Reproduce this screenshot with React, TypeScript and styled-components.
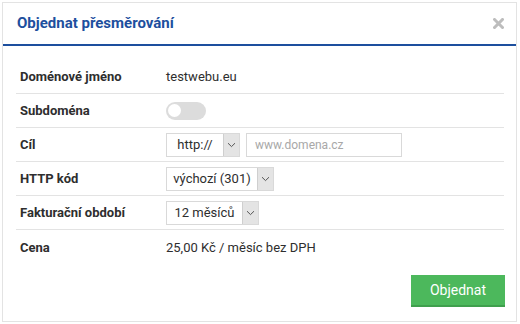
import { FC } from 'react';
import styled, { createGlobalStyle } from 'styled-components';

const colors = {
  text: '#2e2e2e',
  blue: '#1d4f9e',
  border: '#e3e3e3',
  field: '#d9d9d9',
  green: '#4cb85c',
  greenDark: '#3f9f4d',
};

const GlobalStyle = createGlobalStyle`
  html, body {
    margin: 0;
    padding: 0;
    background: #ffffff;
  }
  body {
    font-family: Roboto, 'Liberation Sans', Arial, sans-serif;
    color: ${colors.text};
  }
`;

interface SelectProps {
  value: string;
  width: number;
}

const Select: FC<SelectProps> = ({ value, width }) => (
  <SelectBox>
    <SelectValue $width={width}>{value}</SelectValue>
    <SelectArrow>
      <svg width='9' height='6' viewBox='0 0 9 6'>
        <path d='M1 1.2 L4.5 4.6 L8 1.2' fill='none' stroke='#555' strokeWidth='1' />
      </svg>
    </SelectArrow>
  </SelectBox>
);

const App: FC = () => (
  <>
    <GlobalStyle />
    <Page>
      <Modal>
        <Header>
          <Title>Objednat přesměrování</Title>
          <CloseButton title='Zavřít'>
            <svg width='11' height='11' viewBox='0 0 11 11'>
              <path d='M1.5 1.5 L9.5 9.5 M9.5 1.5 L1.5 9.5' stroke='#bdbdbd' strokeWidth='3' strokeLinecap='square' />
            </svg>
          </CloseButton>
        </Header>
        <Body>
          <Row>
            <Label>Doménové jméno</Label>
            <Value>testwebu.eu</Value>
          </Row>
          <Row>
            <Label>Subdoména</Label>
            <Value>
              <Toggle>
                <Knob />
              </Toggle>
            </Value>
          </Row>
          <Row>
            <Label>Cíl</Label>
            <Value>
              <Select value='http://' width={56} />
              <TextInput placeholder='www.domena.cz' />
            </Value>
          </Row>
          <Row>
            <Label>HTTP kód</Label>
            <Value>
              <Select value='výchozí (301)' width={90} />
            </Value>
          </Row>
          <Row>
            <Label>Fakturační období</Label>
            <Value>
              <Select value='12 měsíců' width={75} />
            </Value>
          </Row>
          <Row $last>
            <Label>Cena</Label>
            <Value>25,00 Kč / měsíc bez DPH</Value>
          </Row>
        </Body>
        <Footer>
          <SubmitButton>Objednat</SubmitButton>
        </Footer>
      </Modal>
    </Page>
  </>
);

const Page = styled.div`
  padding: 2px;
`;

const Modal = styled.div`
  width: 515px;
  height: 320px;
  box-sizing: border-box;
  border: 1px solid ${colors.border};
  background: #ffffff;
  display: flex;
  flex-direction: column;
`;

const Header = styled.div`
  height: 43px;
  box-sizing: border-box;
  border-bottom: 2px solid ${colors.blue};
  display: flex;
  align-items: center;
  justify-content: space-between;
  padding: 0 12px 0 14px;
`;

const Title = styled.div`
  color: ${colors.blue};
  font-size: 15px;
  font-weight: 700;
  margin-top: -2px;
`;

const CloseButton = styled.div`
  display: flex;
  cursor: pointer;
`;

const Body = styled.div`
  padding: 14px 12px 0 13px;
  display: flex;
  flex-direction: column;
`;

const Row = styled.div<{ $last?: boolean }>`
  height: 34px;
  box-sizing: border-box;
  display: flex;
  align-items: center;
  border-bottom: ${({ $last }) => ($last ? 'none' : `1px solid ${colors.border}`)};
  font-size: 13px;
`;

const Label = styled.div`
  width: 150px;
  padding-left: 4px;
  box-sizing: border-box;
  font-weight: 700;
  color: ${colors.text};
`;

const Value = styled.div`
  display: flex;
  align-items: center;
  gap: 6px;
  color: ${colors.text};
`;

const Toggle = styled.div`
  width: 40px;
  height: 18px;
  border-radius: 9px;
  background: #dcdcdc;
  display: flex;
  align-items: center;
  padding-left: 2px;
  box-sizing: border-box;
`;

const Knob = styled.div`
  width: 13px;
  height: 13px;
  border-radius: 50%;
  background: #ffffff;
`;

const SelectBox = styled.div`
  display: flex;
  height: 24px;
  box-sizing: border-box;
  border: 1px solid ${colors.field};
  background: #ffffff;
`;

const SelectValue = styled.div<{ $width: number }>`
  width: ${({ $width }) => $width}px;
  display: flex;
  align-items: center;
  justify-content: center;
  font-size: 13px;
  color: ${colors.text};
`;

const SelectArrow = styled.div`
  width: 15px;
  background: #e4e4e4;
  border-left: 1px solid #cfcfcf;
  display: flex;
  align-items: center;
  justify-content: center;
`;

const TextInput = styled.input`
  width: 156px;
  height: 24px;
  box-sizing: border-box;
  border: 1px solid ${colors.field};
  padding: 0 8px;
  font-family: Roboto, 'Liberation Sans', Arial, sans-serif;
  font-size: 12px;
  color: ${colors.text};
  outline: none;
  &::placeholder {
    color: #a8a8a8;
  }
`;

const Footer = styled.div`
  display: flex;
  justify-content: flex-end;
  padding: 11px 11px 0 0;
`;

const SubmitButton = styled.button`
  width: 94px;
  height: 32px;
  border: none;
  border-bottom: 2px solid ${colors.greenDark};
  background: ${colors.green};
  color: #ffffff;
  font-family: Roboto, 'Liberation Sans', Arial, sans-serif;
  font-size: 14px;
  cursor: pointer;
`;

export default App;
